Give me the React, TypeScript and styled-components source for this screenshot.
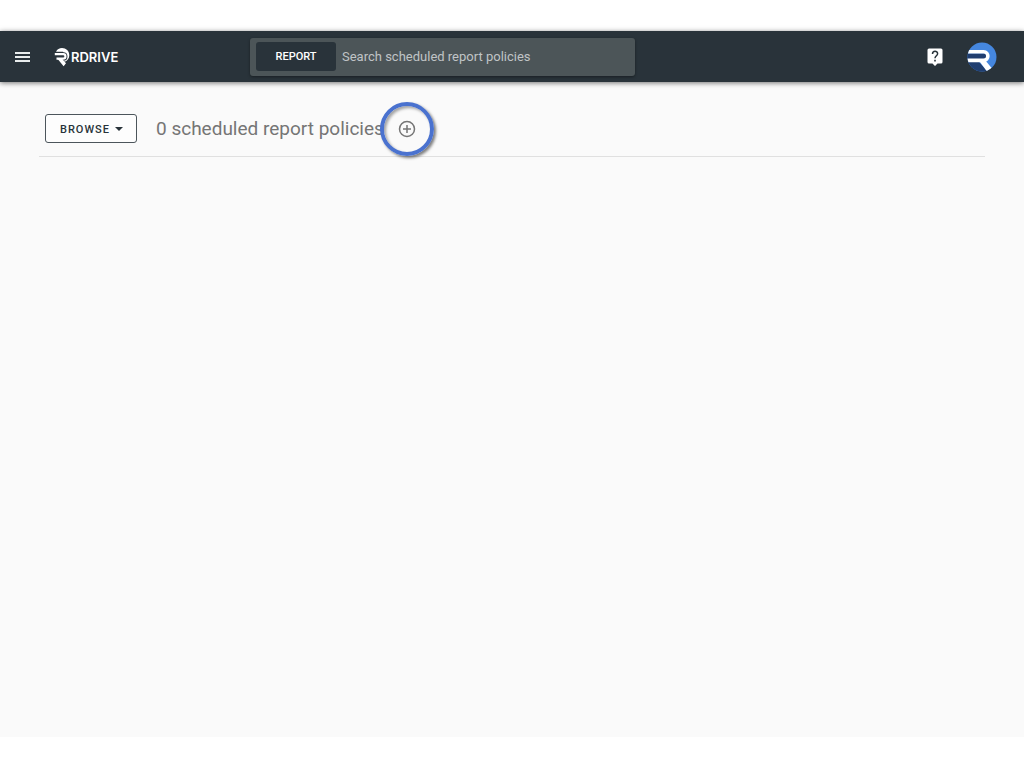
import React from "react";
import styled, { createGlobalStyle } from "styled-components";

const GlobalStyle = createGlobalStyle`
  *, *::before, *::after { box-sizing: border-box; }
  body {
    margin: 0;
    background: #fff;
    font-family: Roboto, "Liberation Sans", sans-serif;
  }
  button, input { font-family: inherit; }
`;

const Page = styled.div`
  display: flex;
  flex-direction: column;
  min-height: 100vh;
  padding: 31px 0;
`;

const Header = styled.header`
  display: flex;
  align-items: center;
  height: 51px;
  background: #29333a;
  box-shadow: 0 1px 5px rgba(0, 0, 0, 0.55);
  z-index: 1;
`;

const Brand = styled.div`
  display: flex;
  align-items: center;
  flex: 0 0 250px;
  gap: 24px;
  padding-left: 15px;
`;

const IconButton = styled.button`
  display: flex;
  align-items: center;
  justify-content: center;
  padding: 0;
  border: 0;
  background: none;
  color: ${(p) => p.color || "#fff"};
  cursor: pointer;
`;

const LogoLink = styled.a`
  display: flex;
  align-items: center;
  gap: 1px;
  color: #fff;
  font: 600 13px/18px Inter, "Liberation Sans", sans-serif;
  text-decoration: none;
`;

const Search = styled.form`
  display: flex;
  align-items: center;
  flex: 0 1 385px;
  height: 38px;
  padding: 0 6px;
  border-radius: 3px;
  background: #4c5558;
  box-shadow: 0 1px 3px rgba(0, 0, 0, 0.4);
`;

const ScopeButton = styled.button`
  flex: 0 0 80px;
  height: 29px;
  padding: 0;
  border: 0;
  border-radius: 3px;
  background: #29333a;
  color: #fff;
  font-size: 11px;
  font-weight: 500;
  line-height: 16px;
`;

const SearchInput = styled.input`
  flex: 1;
  min-width: 0;
  height: 29px;
  padding: 0 6px;
  border: 0;
  outline: 0;
  background: transparent;
  color: #fff;
  font-size: 13px;
  &::placeholder { color: #c0c4c6; opacity: 1; }
`;

const Actions = styled.div`
  display: flex;
  align-items: center;
  gap: 24px;
  margin-left: auto;
  padding-right: 27px;
`;

const Main = styled.main`
  flex: 1;
  padding: 0 39px;
  background: #fafafa;
`;

const TitleBar = styled.div`
  display: flex;
  align-items: center;
  height: 75px;
  padding: 19px 6px 0;
  border-bottom: 1px solid #e0e0e0;
`;

const BrowseButton = styled.button`
  display: flex;
  align-items: center;
  justify-content: center;
  gap: 5px;
  width: 92px;
  height: 29px;
  margin-right: 19px;
  padding: 1px 0 0 1px;
  border: 1px solid #4c555b;
  border-radius: 3px;
  background: #fdfdfd;
  color: #29333a;
  font-size: 11px;
  font-weight: 500;
  letter-spacing: 1px;
`;

const Title = styled.h1`
  margin: 0;
  color: #757575;
  font-size: 19px;
  font-weight: 400;
  line-height: 30px;
  white-space: nowrap;
`;

const AddButton = styled(IconButton)`
  width: 54px;
  height: 54px;
  margin-left: -4px;
  border: 4px solid #4a72cf;
  border-radius: 50%;
  color: #757575;
  box-shadow: 2px 2px 3px rgba(0, 0, 0, 0.5), inset 2px 2px 3px rgba(0, 0, 0, 0.35);
`;

export default function App() {
  return (
    <>
      <GlobalStyle />
      <Page>
        <Header>
          <Brand>
            <IconButton type="button" aria-label="Menu" color="#e8ecec">
              <svg width="15" height="12" viewBox="0 0 15 12" fill="currentColor">
                <path d="M0 1h15v2H0zM0 5h15v2H0zM0 9h15v2H0z" />
              </svg>
            </IconButton>
            <LogoLink href="#" aria-label="RDrive home">
              <svg width="16" height="20" viewBox="0 0 16 20" fill="none">
                <path
                  d="M2 4.800C3.200 2.200 5.400 1 8 1c4 0 7.300 3 7.300 7.200 0 3.200-1.900 5.500-4.500 6.500L8.300 12l2.400-4-1.700-3.200z"
                  fill="#fff"
                />
                <path d="M1 7.200h8.200c3 0 3 4.600 0 4.600H4" stroke="#29333a" strokeWidth="4" />
                <path d="M.8 7.200h8.400c3 0 3 4.400 0 4.400H2.500" stroke="#fff" strokeWidth="2.200" />
                <path d="M3.500 11.800h4.500l4 4.500-2.400 3z" fill="#fff" />
              </svg>
              <span>RDRIVE</span>
            </LogoLink>
          </Brand>
          <Search role="search">
            <ScopeButton type="button">REPORT</ScopeButton>
            <SearchInput
              type="text"
              aria-label="Search scheduled report policies"
              placeholder="Search scheduled report policies"
            />
          </Search>
          <Actions>
            <IconButton type="button" aria-label="Help">
              <svg width="16" height="18" viewBox="0 0 16 18">
                <path d="M2 .5h12q1.500 0 1.500 1.500v12q0 1.500-1.500 1.500h-3.500L8 18l-2.500-2.500H2Q.5 15.500.5 14V2Q.5.5 2 .5z" fill="#fff" />
                <path d="M5.500 6C5.500 2.400 10.600 2.500 10.600 5.700 10.600 7.600 8 7.900 8 10.200" fill="none" stroke="#29333a" strokeWidth="1.500" />
                <path d="M7.200 11.800h1.600v1.600H7.200z" fill="#29333a" />
              </svg>
            </IconButton>
            <IconButton type="button" aria-label="Account">
              <svg width="30" height="30" viewBox="0 0 30 30">
                <defs>
                  <clipPath id="avatar">
                    <circle cx="15" cy="15" r="14.500" />
                  </clipPath>
                </defs>
                <g clipPath="url(#avatar)">
                  <path d="M0 0h30v30H0z" fill="#4587df" />
                  <path d="M0 11.500h19v6H0zM0 20h12l9 10H0z" fill="#203e70" />
                  <path d="M0 9.800h16.500c5.800 0 5.800 8.600 0 8.600H0" fill="none" stroke="#fff" strokeWidth="3.600" />
                  <path d="M11.500 18h6.500l7 8.500-5 3z" fill="#fff" />
                </g>
              </svg>
            </IconButton>
          </Actions>
        </Header>
        <Main>
          <TitleBar>
            <BrowseButton type="button">
              BROWSE
              <svg width="8" height="4" viewBox="0 0 8 4" fill="currentColor">
                <path d="M0 0h8L4 4z" />
              </svg>
            </BrowseButton>
            <Title>0 scheduled report policies</Title>
            <AddButton type="button" aria-label="Add scheduled report policy">
              <svg width="18" height="18" viewBox="0 0 18 18" fill="none" stroke="currentColor" strokeWidth="1.500">
                <circle cx="9" cy="9" r="7.500" />
                <path d="M9 5v8M5 9h8" />
              </svg>
            </AddButton>
          </TitleBar>
        </Main>
      </Page>
    </>
  );
}
